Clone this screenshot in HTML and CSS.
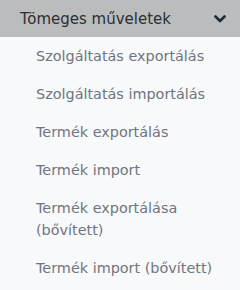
FILE: index.html
```html
<!DOCTYPE html>
<html lang="hu">
<head>
    <meta charset="UTF-8">
    <title>Tömeges műveletek</title>
    <link rel="stylesheet" href="styles.css">
</head>
<body>
    <div class="menu">
        <div class="menu-head">
            <span>Tömeges műveletek</span>
            <svg class="chevron" width="12" height="8" viewBox="0 0 12 8">
                <path d="M1.5 1.5 L6 6 L10.5 1.5" fill="none" stroke="#1f2a36" stroke-width="2.6" stroke-linecap="round" stroke-linejoin="round"/>
            </svg>
        </div>
        <ul class="menu-list">
            <li><a href="#">Szolgáltatás exportálás</a></li>
            <li><a href="#">Szolgáltatás importálás</a></li>
            <li><a href="#">Termék exportálás</a></li>
            <li><a href="#">Termék import</a></li>
            <li><a href="#">Termék exportálása (bővített)</a></li>
            <li><a href="#">Termék import (bővített)</a></li>
        </ul>
    </div>
</body>
</html>
```

FILE: styles.css
```css
body {
    margin: 0;
    padding: 0;
    background: #f8f9fa;
    font-family: 'DejaVu Sans', sans-serif;
}
.menu {
    width: 240px;
}
.menu-head {
    display: flex;
    align-items: center;
    justify-content: space-between;
    height: 37px;
    padding: 0 14px 0 20px;
    background: #bbbcbd;
    color: #2b2f33;
    font-size: 15px;
    box-sizing: border-box;
}
.chevron {
    display: block;
}
.menu-list {
    list-style: none;
    margin: 0;
    padding: 0;
}
.menu-list li {
    padding: 8px 12px 8px 36px;
    line-height: 22px;
    font-size: 14.4px;
}
.menu-list a {
    color: #6f767d;
    text-decoration: none;
}
```
